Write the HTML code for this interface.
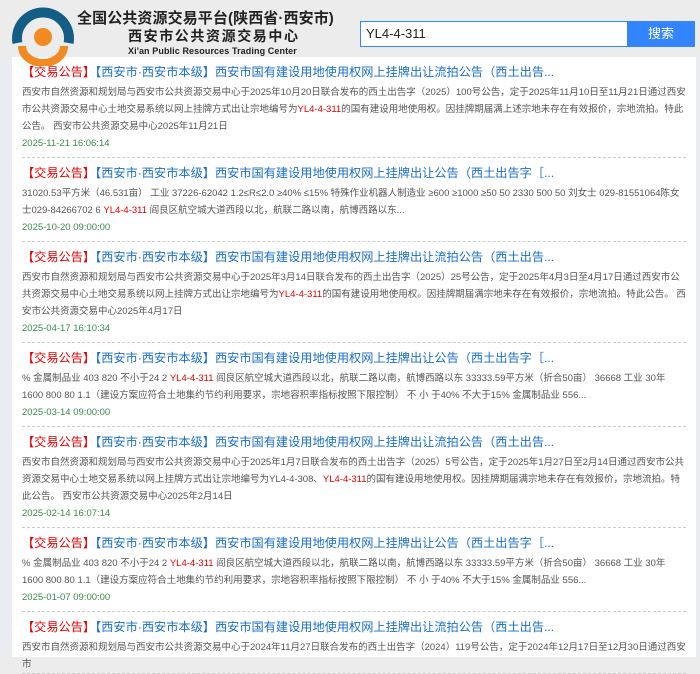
<!DOCTYPE html>
<html><head><meta charset="utf-8"><style>
*{margin:0;padding:0;box-sizing:border-box}
body{width:700px;height:652px;overflow:hidden;background:linear-gradient(180deg,#ececec 0,#ececec 57px,#e9edf1 57px);font-family:"Liberation Sans","Noto Sans CJK SC",sans-serif;position:relative}
.t1{position:absolute;left:77px;top:7px;font-size:15px;font-weight:bold;color:#222;letter-spacing:0.1px}
.t2{position:absolute;left:128px;top:26px;font-size:14px;font-weight:bold;color:#222;letter-spacing:1.6px}
.t3{position:absolute;left:128px;top:46px;font-size:9px;font-weight:bold;color:#222;letter-spacing:0.1px}
.inp{position:absolute;left:360px;top:21px;width:268px;height:26px;border:1px solid #3385ff;background:#fff;font-size:13px;line-height:24px;padding-left:5px;color:#222}
.btn{position:absolute;left:627px;top:21px;width:68px;height:26px;background:#3385ff;color:#fff;font-size:13px;line-height:26px;text-align:center}
.box{position:absolute;left:12px;top:57px;width:684px;height:600px;background:#fff}
.it{margin:0 10px 0 10px;border-bottom:1px dashed #ccc;padding:6px 0 0 0}
.tt{font-size:12.2px;line-height:18px;height:19px;color:#1a6fc9;white-space:nowrap;overflow:hidden}
.tt .r{color:#e60000}
.bd{font-size:9.5px;line-height:17px;color:#555;margin-top:2px}
.bd b{color:#e60000;font-weight:normal}
.dt{font-size:9.5px;line-height:17px;color:#3a8a4a;padding-bottom:5px}
</style></head><body>
<svg style="position:absolute;left:0;top:0;z-index:2" width="80" height="66" viewBox="0 0 80 66">
<path d="M17.4 43 A26 26 0 1 1 68.6 43" fill="none" stroke="#145e86" stroke-width="10"/>
<circle cx="43" cy="37" r="9" fill="#f18a21"/>
<path d="M22 46 A21 17 0 0 0 64 46" fill="none" stroke="#f18a21" stroke-width="8"/>
</svg>
<div class="t1">全国公共资源交易平台(陕西省·西安市)</div>
<div class="t2">西安市公共资源交易中心</div>
<div class="t3">Xi'an Public Resources Trading Center</div>
<div class="inp">YL4-4-311</div>
<div class="btn">搜索</div>
<div class="box">
<div class="it"><div class="tt"><span class="r">【交易公告】</span>【西安市·西安市本级】西安市国有建设用地使用权网上挂牌出让流拍公告（西土出告...</div>
<div class="bd">西安市自然资源和规划局与西安市公共资源交易中心于2025年10月20日联合发布的西土出告字（2025）100号公告，定于2025年11月10日至11月21日通过西安市公共资源交易中心土地交易系统以网上挂牌方式出让宗地编号为<b>YL4-4-311</b>的国有建设用地使用权。因挂牌期届满上述宗地未存在有效报价，宗地流拍。特此公告。 西安市公共资源交易中心2025年11月21日</div>
<div class="dt">2025-11-21 16:06:14</div></div>
<div class="it"><div class="tt"><span class="r">【交易公告】</span>【西安市·西安市本级】西安市国有建设用地使用权网上挂牌出让公告（西土出告字［...</div>
<div class="bd">31020.53平方米（46.531亩） 工业 37226-62042 1.2≤R≤2.0 ≥40% ≤15% 特殊作业机器人制造业 ≥600 ≥1000 ≥50 50 2330 500 50 刘女士 029-81551064陈女士029-84266702 6 <b>YL4-4-311</b> 阎良区航空城大道西段以北，航联二路以南，航博西路以东...</div>
<div class="dt">2025-10-20 09:00:00</div></div>
<div class="it"><div class="tt"><span class="r">【交易公告】</span>【西安市·西安市本级】西安市国有建设用地使用权网上挂牌出让流拍公告（西土出告...</div>
<div class="bd">西安市自然资源和规划局与西安市公共资源交易中心于2025年3月14日联合发布的西土出告字（2025）25号公告，定于2025年4月3日至4月17日通过西安市公共资源交易中心土地交易系统以网上挂牌方式出让宗地编号为<b>YL4-4-311</b>的国有建设用地使用权。因挂牌期届满宗地未存在有效报价，宗地流拍。特此公告。 西安市公共资源交易中心2025年4月17日</div>
<div class="dt">2025-04-17 16:10:34</div></div>
<div class="it"><div class="tt"><span class="r">【交易公告】</span>【西安市·西安市本级】西安市国有建设用地使用权网上挂牌出让公告（西土出告字［...</div>
<div class="bd">% 金属制品业 403 820 不小于24 2 <b>YL4-4-311</b> 阎良区航空城大道西段以北，航联二路以南，航博西路以东 33333.59平方米（折合50亩） 36668 工业 30年 1600 800 80 1.1（建设方案应符合土地集约节约利用要求，宗地容积率指标按照下限控制） 不 小 于40% 不大于15% 金属制品业 556...</div>
<div class="dt">2025-03-14 09:00:00</div></div>
<div class="it"><div class="tt"><span class="r">【交易公告】</span>【西安市·西安市本级】西安市国有建设用地使用权网上挂牌出让流拍公告（西土出告...</div>
<div class="bd">西安市自然资源和规划局与西安市公共资源交易中心于2025年1月7日联合发布的西土出告字（2025）5号公告，定于2025年1月27日至2月14日通过西安市公共资源交易中心土地交易系统以网上挂牌方式出让宗地编号为YL4-4-308、<b>YL4-4-311</b>的国有建设用地使用权。因挂牌期届满宗地未存在有效报价，宗地流拍。特此公告。 西安市公共资源交易中心2025年2月14日</div>
<div class="dt">2025-02-14 16:07:14</div></div>
<div class="it"><div class="tt"><span class="r">【交易公告】</span>【西安市·西安市本级】西安市国有建设用地使用权网上挂牌出让公告（西土出告字［...</div>
<div class="bd">% 金属制品业 403 820 不小于24 2 <b>YL4-4-311</b> 阎良区航空城大道西段以北，航联二路以南，航博西路以东 33333.59平方米（折合50亩） 36668 工业 30年 1600 800 80 1.1（建设方案应符合土地集约节约利用要求，宗地容积率指标按照下限控制） 不 小 于40% 不大于15% 金属制品业 556...</div>
<div class="dt">2025-01-07 09:00:00</div></div>
<div class="it"><div class="tt"><span class="r">【交易公告】</span>【西安市·西安市本级】西安市国有建设用地使用权网上挂牌出让流拍公告（西土出告...</div>
<div class="bd">西安市自然资源和规划局与西安市公共资源交易中心于2024年11月27日联合发布的西土出告字（2024）119号公告，定于2024年12月17日至12月30日通过西安市</div></div>
</div>
</body></html>
